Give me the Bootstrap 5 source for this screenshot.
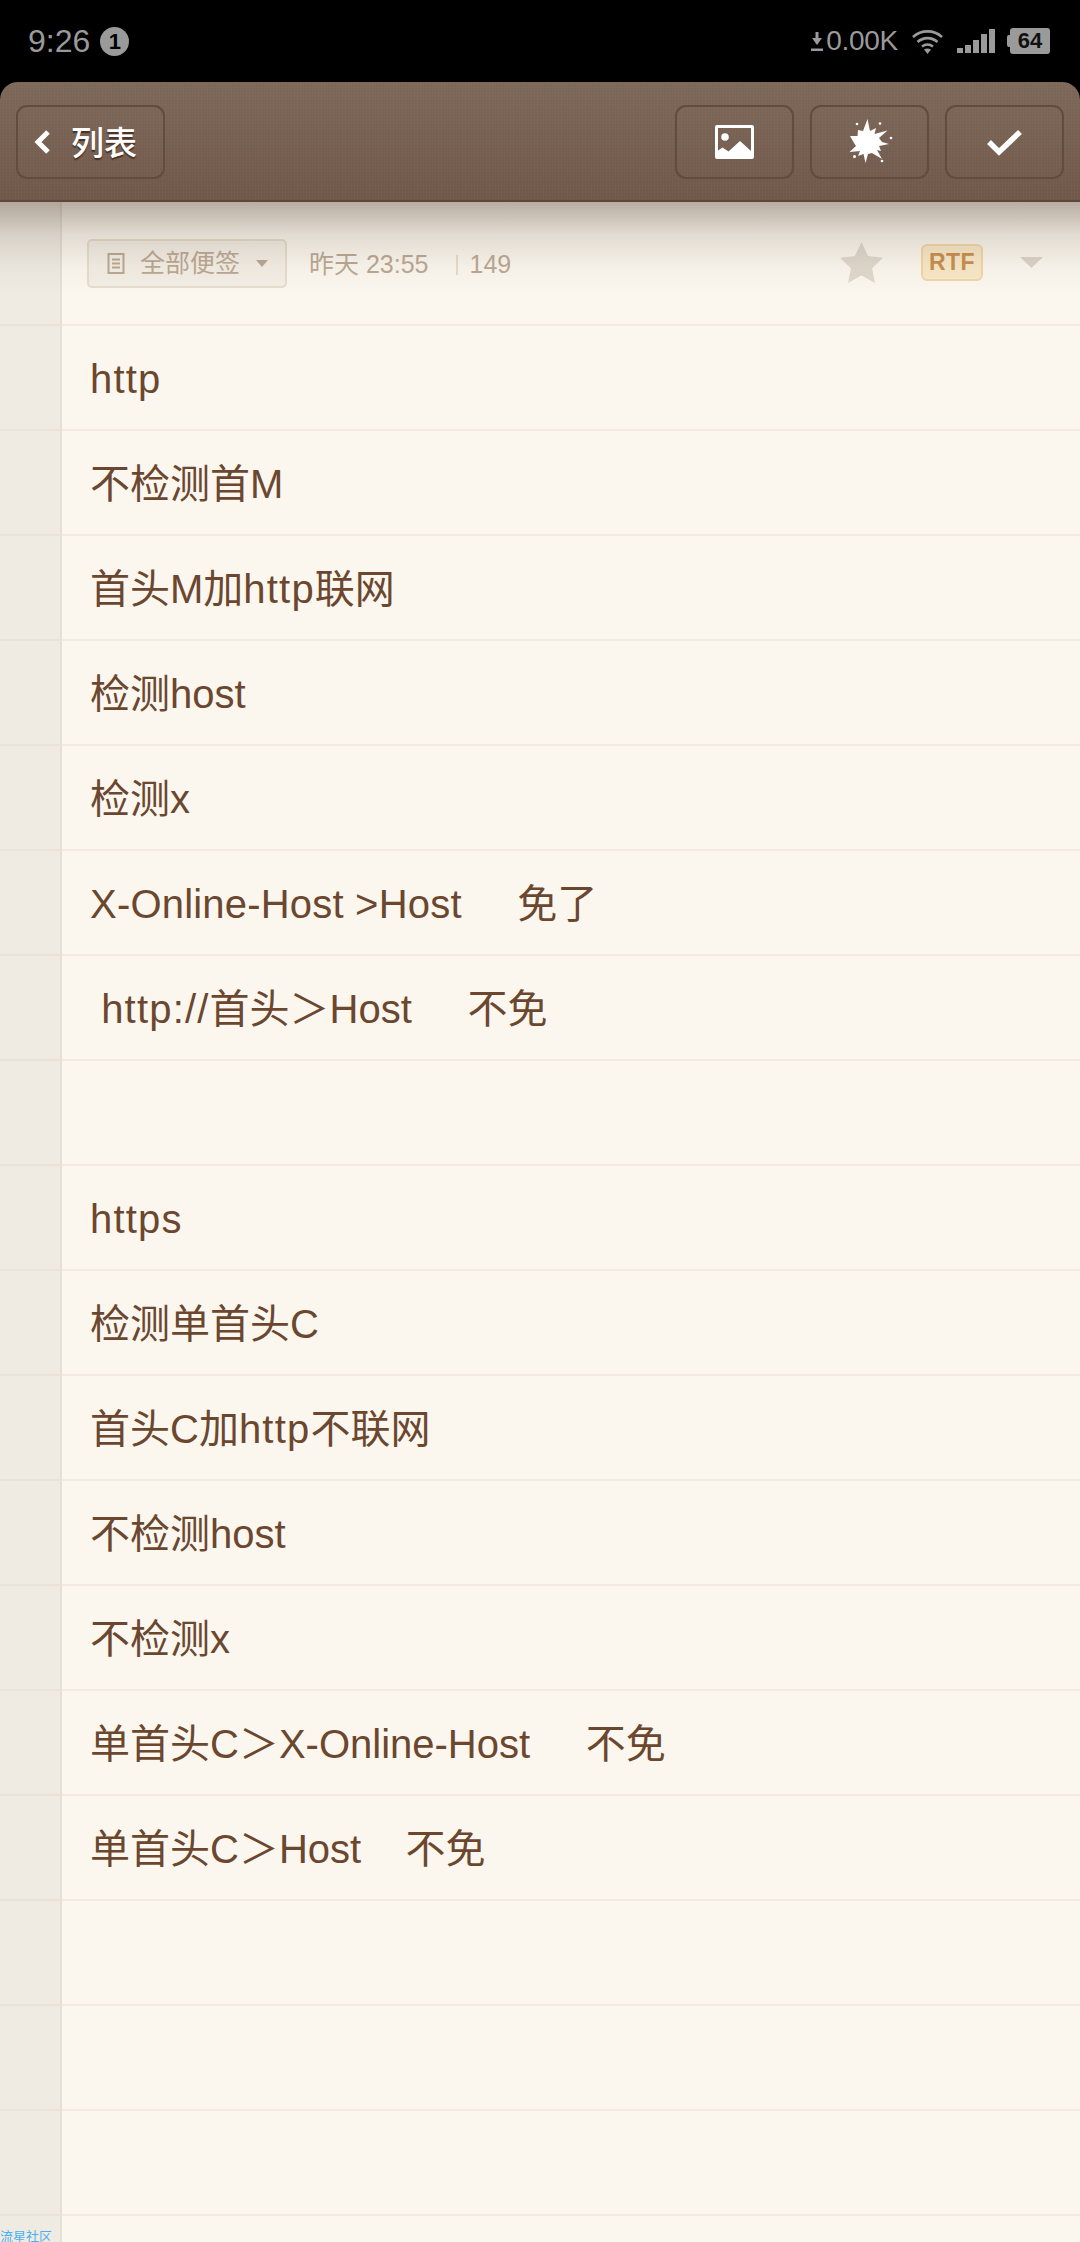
<!DOCTYPE html>
<html lang="zh-CN">
<head>
    <meta charset="UTF-8">
    <meta name="viewport" content="width=device-width, initial-scale=1.0">
    <title>便签</title>
    <link rel="stylesheet" href="https://cdn.jsdelivr.net/npm/bootstrap@5.3.0/dist/css/bootstrap.min.css">
    <style>
        html, body { height: 2242px; overflow: hidden; background: #000; }
        body { font-family: "Liberation Sans", "Noto Sans CJK SC", sans-serif; }
        .status-bar { height: 82px; padding: 0 30px 0 28px; color: #9a9a9a; font-size: 28px; }
        .status-clock { font-size: 32px; }
        .status-num { width: 29px; height: 29px; margin-left: 10px; border-radius: 50%; background: #9a9a9a; color: #000; font-size: 22px; font-weight: 700; line-height: 29px; text-align: center; }
        .status-speed { margin-left: 3px; letter-spacing: -.3px; }
        .status-nub { width: 3px; height: 12px; margin-left: 12px; border-radius: 2px 0 0 2px; background: #9a9a9a; }
        .status-battery { width: 40px; height: 26px; border-radius: 3px; background: #9a9a9a; color: #111; font-size: 22px; font-weight: 700; line-height: 26px; text-align: center; }

        .tool-bar {
            height: 120px; padding: 23px 16px 0 16px; gap: 16px; border-radius: 18px 18px 0 0; border-bottom: 2px solid #5d4738;
            background:
                repeating-linear-gradient(90deg, rgba(255,255,255,.018) 0 1px, transparent 1px 3px),
                repeating-linear-gradient(0deg, rgba(0,0,0,.025) 0 1px, transparent 1px 3px),
                linear-gradient(#7e695a, #71594a);
        }
        .tool-btn { width: 119px; height: 74px; padding: 0; border: 2px solid #624c3e; border-radius: 11px; background: rgba(255,255,255,.012); }
        .tool-btn:hover { border-color: #624c3e; background: rgba(255,255,255,.012); }
        .tool-back { width: 149px; padding-left: 16px; color: #fff; font-family: "Noto Sans CJK SC", sans-serif; font-size: 33px; font-weight: 500; text-shadow: 0 2px 1px rgba(50,30,20,.7); }
        .tool-back:hover { color: #fff; }
        .tool-back svg { margin-right: 20px; }

        .note-sheet { position: relative; height: 2040px; overflow: hidden; background: #fbf7ee; }
        .sheet-shade { position: absolute; top: 0; left: 0; right: 0; height: 92px; background: linear-gradient(rgba(92,72,56,.42), rgba(92,72,56,.16) 35%, rgba(92,72,56,.04) 70%, transparent); pointer-events: none; z-index: 1; }
        .note-line { height: 105px; border-bottom: 2px solid #f3ebdf; }
        .note-meta { height: 124px; }
        .note-gutter { width: 62px; flex: none; margin-bottom: -2px; background: #efebe2; border-right: 2px solid #e6dfd3; border-bottom: 2px solid #e9e3d8; }
        .note-text { padding: 3px 0 0 28px; color: #6b4730; font-size: 40px; line-height: 100px; white-space: pre; }
        .note-wide { letter-spacing: 1.2px; }
        .note-snug { letter-spacing: .2px; }
        .meta-body { padding: 37px 37px 0 25px; color: #bba893; font-size: 25px; }
        .meta-picker { width: 200px; height: 49px; padding-left: 18px; border: 2px solid #e6dccd; border-radius: 5px; background: #f3eee5; color: #bba893; }
        .meta-picker span { margin: 0 16px 0 15px; }
        .meta-info { height: 49px; padding-top: 2px; }
        .meta-time { margin-left: 22px; }
        .meta-sep { width: 2px; height: 20px; margin: 0 12px 0 27px; background: #e6dccd; }
        .meta-tools { height: 49px; margin-top: -1px; }
        .meta-tag { width: 62px; height: 37px; margin: 0 37px 0 38px; border: 2px solid #f1d7a6; border-radius: 6px; background: #f8e8c7; color: #c88f4f; font-size: 23px; font-weight: 700; letter-spacing: .5px; line-height: 33px; text-align: center; }
        .mark-source { position: absolute; left: 0; bottom: 0; color: #4bb0f2; font-family: "Noto Sans CJK SC", sans-serif; font-size: 13px; line-height: 13px; z-index: 2; }
    </style>
</head>
<body>
    <!-- Status bar -->
    <div class="status-bar d-flex align-items-center">
        <span class="status-clock">9:26</span>
        <span class="status-num">1</span>
        <div class="ms-auto d-flex align-items-center">
            <svg width="12" height="19" viewBox="0 0 12 19" fill="#9a9a9a"><path d="M4.500 0h3v6H11l-5 7-5-7h3.500zM0 16.500h12V19H0z"/></svg>
            <span class="status-speed">0.00K</span>
            <svg style="margin-left:14px" width="31" height="25" viewBox="0 0 31 25" fill="none" stroke="#9a9a9a" stroke-width="2.600"><path d="M1 8c8.300-7.500 20.700-7.500 29 0M5.500 13c6-5.200 14-5.200 20 0M10 17.500c3.500-2.600 7.500-2.600 11 0"/><path d="M12 20.500c2.300-1.200 4.700-1.200 7 0L15.500 25z" fill="#9a9a9a" stroke="none"/></svg>
            <svg style="margin-left:14px" width="38" height="24" viewBox="0 0 38 24" fill="#9a9a9a"><path d="M0 19h6v5H0zM8 16h6v8H8zM16 11h6v13h-6zM24 5h6v19h-6zM32 0h6v24h-6z"/></svg>
            <span class="status-nub"></span>
            <span class="status-battery">64</span>
        </div>
    </div>

    <!-- Toolbar -->
    <div class="tool-bar d-flex">
        <button type="button" class="btn tool-btn tool-back d-flex align-items-center me-auto">
            <svg width="17" height="26" viewBox="0 0 17 26" fill="none" stroke="#fff" stroke-width="5"><path d="M14 3 4 13l10 10"/></svg>列表
        </button>
        <button type="button" class="btn tool-btn d-flex align-items-center justify-content-center">
            <svg width="39" height="34" viewBox="0 0 39 34"><path fill="#fff" fill-rule="evenodd" d="M2 0h35a2 2 0 0 1 2 2v30a2 2 0 0 1-2 2H2a2 2 0 0 1-2-2V2a2 2 0 0 1 2-2zm1 3v22.500l4.500-3 6 4L25 16l11 10V3z"/><circle cx="10" cy="12" r="3.800" fill="#fff"/></svg>
        </button>
        <button type="button" class="btn tool-btn d-flex align-items-center justify-content-center">
            <svg width="49" height="48" viewBox="15 9 49 48" fill="#fff"><path d="M37.500 10 40 22l6-3-1.500 6 13-3.500L49 29l3 4 7 2-10 2 2 5-4-1 5 9-10-6-4 1-2.500 9-2-9-5.500 2 2-5-10.500 1 6.500-6-2-3-4-7 7.500 0 .500-6 5 1z"/><circle cx="37" cy="33" r="11"/><circle cx="27" cy="15" r="1.300"/><circle cx="50" cy="14.500" r="1.300"/><circle cx="61" cy="29" r="1.300"/><circle cx="24.500" cy="47.500" r="1.500"/><circle cx="52" cy="52" r="1.300"/></svg>
        </button>
        <button type="button" class="btn tool-btn d-flex align-items-center justify-content-center">
            <svg width="35" height="27" viewBox="0 0 35 27" fill="none" stroke="#fff" stroke-width="5.500"><path d="M2 13l10 10L33 3"/></svg>
        </button>
    </div>

    <!-- Note sheet -->
    <div class="note-sheet">
        <div class="sheet-shade"></div>

        <div class="note-line note-meta d-flex">
            <div class="note-gutter"></div>
            <div class="meta-body flex-grow-1 d-flex align-items-start">
                <div class="meta-picker d-flex align-items-center">
                    <svg width="18" height="21" viewBox="0 0 18 21" fill="none" stroke="#bba893" stroke-width="2"><path d="M1.500 1h15v19h-15zM5 6.500h8M5 10.500h8M5 14.500h8"/></svg>
                    <span>全部便签</span>
                    <svg width="12" height="7" viewBox="0 0 12 7" fill="#bba893"><path d="M0 0h12L6 7z"/></svg>
                </div>
                <div class="meta-info d-flex align-items-center">
                    <span class="meta-time">昨天 23:55</span>
                    <span class="meta-sep"></span>
                    <span>149</span>
                </div>
                <div class="meta-tools ms-auto d-flex align-items-center">
                    <svg width="43" height="41" viewBox="0 0 41 39" fill="#e0d8cc"><path d="M20.500 0l6.300 13.200 14.200 1.800-10.400 10 2.700 14-12.800-7-12.800 7 2.700-14L0 15l14.200-1.800z"/></svg>
                    <span class="meta-tag">RTF</span>
                    <svg width="23" height="11" viewBox="0 0 23 11" fill="#dcd3c6"><path d="M0 0h23L11.500 11z"/></svg>
                </div>
            </div>
        </div>

        <div class="note-line d-flex"><div class="note-gutter"></div><div class="note-text"><span class="note-wide">http</span></div></div>
        <div class="note-line d-flex"><div class="note-gutter"></div><div class="note-text">不检测首M</div></div>
        <div class="note-line d-flex"><div class="note-gutter"></div><div class="note-text">首头M加<span class="note-wide">http</span>联网</div></div>
        <div class="note-line d-flex"><div class="note-gutter"></div><div class="note-text">检测host</div></div>
        <div class="note-line d-flex"><div class="note-gutter"></div><div class="note-text">检测x</div></div>
        <div class="note-line d-flex"><div class="note-gutter"></div><div class="note-text"><span class="note-snug">X-Online-Host &gt;Host</span>     免了</div></div>
        <div class="note-line d-flex"><div class="note-gutter"></div><div class="note-text"> <span class="note-wide">http://</span>首头＞Host     不免</div></div>
        <div class="note-line d-flex"><div class="note-gutter"></div><div class="note-text"></div></div>
        <div class="note-line d-flex"><div class="note-gutter"></div><div class="note-text"><span class="note-wide">https</span></div></div>
        <div class="note-line d-flex"><div class="note-gutter"></div><div class="note-text">检测单首头C</div></div>
        <div class="note-line d-flex"><div class="note-gutter"></div><div class="note-text">首头C加<span class="note-wide">http</span>不联网</div></div>
        <div class="note-line d-flex"><div class="note-gutter"></div><div class="note-text">不检测host</div></div>
        <div class="note-line d-flex"><div class="note-gutter"></div><div class="note-text">不检测x</div></div>
        <div class="note-line d-flex"><div class="note-gutter"></div><div class="note-text">单首头C＞X-Online-Host     不免</div></div>
        <div class="note-line d-flex"><div class="note-gutter"></div><div class="note-text">单首头C＞Host    不免</div></div>
        <div class="note-line d-flex"><div class="note-gutter"></div><div class="note-text"></div></div>
        <div class="note-line d-flex"><div class="note-gutter"></div><div class="note-text"></div></div>
        <div class="note-line d-flex"><div class="note-gutter"></div><div class="note-text"></div></div>
        <div class="note-line d-flex"><div class="note-gutter"></div><div class="note-text"></div></div>

        <div class="mark-source">流星社区</div>
    </div>

    <script src="https://cdn.jsdelivr.net/npm/bootstrap@5.3.0/dist/js/bootstrap.bundle.min.js"></script>
</body>
</html>
